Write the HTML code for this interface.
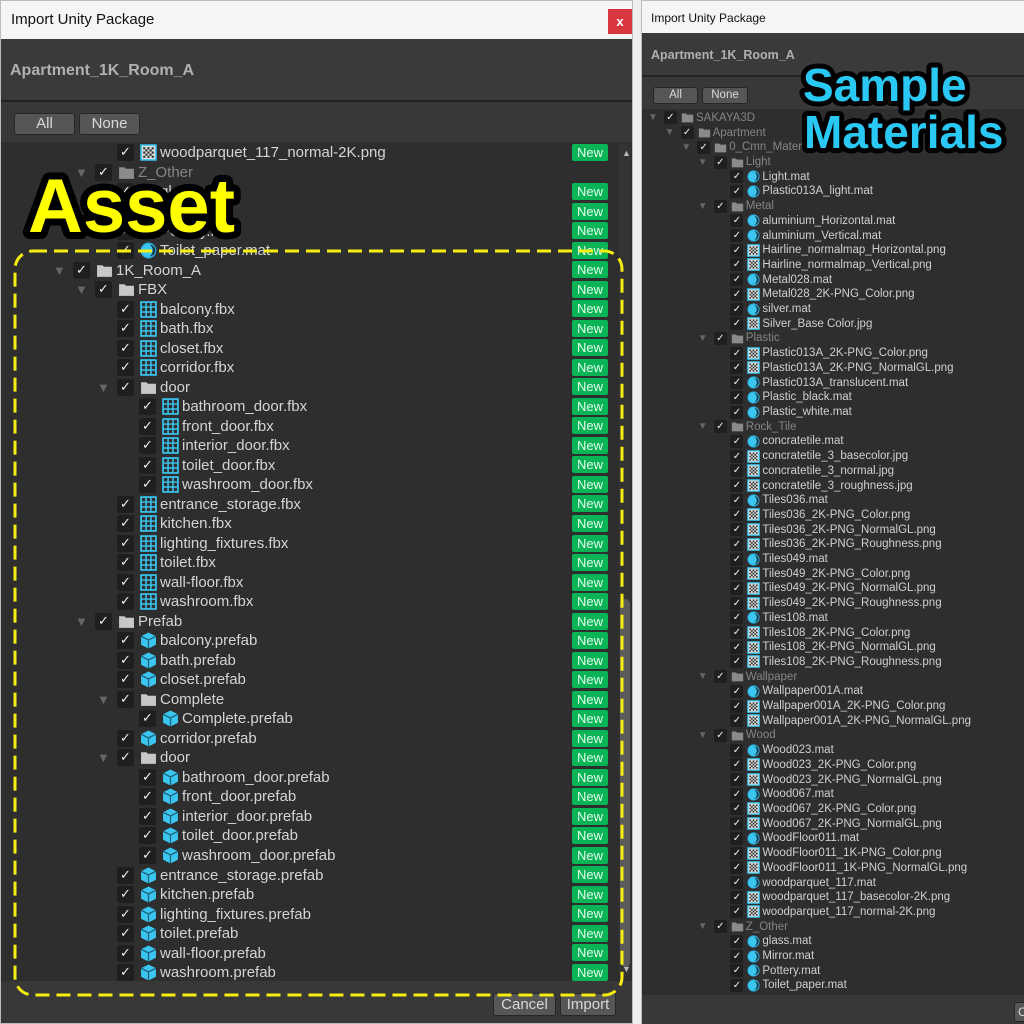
<!DOCTYPE html>
<html><head><meta charset="utf-8"><style>
*{margin:0;padding:0;box-sizing:border-box}
body{width:1024px;height:1024px;background:#eeeeee;position:relative;overflow:hidden;font-family:"Liberation Sans",sans-serif}
.win{position:absolute;background:#383838;overflow:hidden}
.tb{position:absolute;left:0;right:0;top:0;background:#f5f5f5;color:#111}
.hd{position:absolute;left:0;right:0;background:#3a3a3a;border-bottom:2px solid #222;color:#b0b0b0;font-weight:bold}
.btn{position:absolute;background:#565656;border:1px solid #262626;border-radius:3px;color:#d8d8d8;text-align:center}
.list{position:absolute;background:#2e2e2e;overflow:hidden}
.L .r{height:19.52px;display:flex;align-items:center;font-size:15px;color:#d4d4d4;white-space:nowrap;position:relative}
.L .a{width:20px;color:#666;font-size:13px;text-align:left}
.L .c{width:17px;height:17px;background:#1f1f1f;border-radius:2px;color:#f0f0f0;font-size:13px;line-height:17px;text-align:center;margin-right:6px;font-family:"DejaVu Sans",sans-serif}
.L svg{width:17px;height:17px;margin-right:3px;flex:none}
.L .n{position:absolute;left:571px;top:1px;width:36px;height:17px;background:#08b455;border-radius:2px;color:#e6ffee;font-size:13px;line-height:17px;text-align:center}
.R .r{height:14.71px;display:flex;align-items:center;font-size:11.5px;color:#d0d0d0;white-space:nowrap}
.R .a{width:16px;color:#666;font-size:10px}
.R .c{width:13px;height:13px;background:#1f1f1f;border-radius:2px;color:#eee;font-size:10px;line-height:13px;text-align:center;margin-right:4px;font-family:"DejaVu Sans",sans-serif}
.R svg{width:13px;height:13px;margin-right:2px;flex:none}
.g{color:#858585}
</style></head><body>
<svg width="0" height="0" style="position:absolute">
<symbol id="mat" viewBox="0 0 16 16"><circle cx="8" cy="8" r="7" fill="#3ac6f0"/><path d="M9 2.5a5.5 5.5 0 0 1 0 11a6.5 6.5 0 0 0 0-11z" fill="#1a3a48"/><circle cx="8" cy="8" r="7" fill="none" stroke="#2aa8d8" stroke-width="1"/></symbol>
<symbol id="tex" viewBox="0 0 16 16"><rect x="1" y="1" width="14" height="14" fill="#ddd" stroke="#3ac6f0" stroke-width="1.5"/><path d="M3 3h2v2H3zM7 3h2v2H7zM11 3h2v2h-2zM5 5h2v2H5zM9 5h2v2H9zM3 7h2v2H3zM7 7h2v2H7zM11 7h2v2h-2zM5 9h2v2H5zM9 9h2v2H9zM3 11h2v2H3zM7 11h2v2H7zM11 11h2v2h-2z" fill="#333"/></symbol>
<symbol id="fbx" viewBox="0 0 16 16"><rect x="1" y="1" width="14" height="14" fill="none" stroke="#3ac6f0" stroke-width="1.6"/><path d="M5.7 1v14M10.3 1v14M1 5.7h14M1 10.3h14" stroke="#3ac6f0" stroke-width="1.4"/></symbol>
<symbol id="pre" viewBox="0 0 16 16"><path d="M8 0.5L15 4v8l-7 3.5L1 12V4z" fill="#3ac6f0"/><path d="M1 4l7 3.5L15 4M8 7.5v8" fill="none" stroke="#1e5f78" stroke-width="1.2"/></symbol>
<symbol id="fol" viewBox="0 0 16 16"><path d="M1 3h5l1.5 1.5H15V14H1z" fill="#c8c8c8"/></symbol>
<symbol id="folg" viewBox="0 0 16 16"><path d="M1 3h5l1.5 1.5H15V14H1z" fill="#8a8a8a"/></symbol>
</svg>

<!-- LEFT WINDOW -->
<div class="win" style="left:0;top:0;width:633px;height:1024px;border:1px solid #bbb">
<div class="tb" style="height:38px;font-size:15px;padding:10px 0 0 10px">Import Unity Package</div>
<div style="position:absolute;left:607px;top:8px;width:24px;height:25px;background:#d8373f;color:#fff;font-size:13px;text-align:center;line-height:25px;font-weight:bold">x</div>
<div class="hd" style="top:38px;height:63px;font-size:16px;padding:23px 0 0 9px">Apartment_1K_Room_A</div>
<div class="btn" style="left:13px;top:112px;width:61px;height:22px;font-size:15px;line-height:20px">All</div>
<div class="btn" style="left:78px;top:112px;width:61px;height:22px;font-size:15px;line-height:20px">None</div>
<div class="list L" style="left:0;top:141px;width:632px;height:839px">
<div style="position:absolute;left:618px;top:2px;width:12px;height:832px;background:#333"></div>
<div style="position:absolute;left:621px;top:6px;color:#bbb;font-size:9px">▲</div>
<div style="position:absolute;left:619px;top:457px;width:10px;height:368px;background:#5b5b5b;border-radius:5px"></div>
<div style="position:absolute;left:621px;top:822px;color:#bbb;font-size:9px">▼</div>
<div style="position:absolute;top:1.2px;left:0;right:0">
<div class="r" style="padding-left:96px"><span class="a"></span><span class="c">✓</span><svg><use href="#tex"/></svg>woodparquet_117_normal-2K.png<span class="n">New</span></div>
<div class="r" style="padding-left:74px"><span class="a">▼</span><span class="c">✓</span><svg><use href="#folg"/></svg><span class="g">Z_Other</span></div>
<div class="r" style="padding-left:96px"><span class="a"></span><span class="c">✓</span><svg><use href="#mat"/></svg>glass.mat<span class="n">New</span></div>
<div class="r" style="padding-left:96px"><span class="a"></span><span class="c">✓</span><svg><use href="#mat"/></svg>Mirror.mat<span class="n">New</span></div>
<div class="r" style="padding-left:96px"><span class="a"></span><span class="c">✓</span><svg><use href="#mat"/></svg>Pottery.mat<span class="n">New</span></div>
<div class="r" style="padding-left:96px"><span class="a"></span><span class="c">✓</span><svg><use href="#mat"/></svg>Toilet_paper.mat<span class="n">New</span></div>
<div class="r" style="padding-left:52px"><span class="a">▼</span><span class="c">✓</span><svg><use href="#fol"/></svg>1K_Room_A<span class="n">New</span></div>
<div class="r" style="padding-left:74px"><span class="a">▼</span><span class="c">✓</span><svg><use href="#fol"/></svg>FBX<span class="n">New</span></div>
<div class="r" style="padding-left:96px"><span class="a"></span><span class="c">✓</span><svg><use href="#fbx"/></svg>balcony.fbx<span class="n">New</span></div>
<div class="r" style="padding-left:96px"><span class="a"></span><span class="c">✓</span><svg><use href="#fbx"/></svg>bath.fbx<span class="n">New</span></div>
<div class="r" style="padding-left:96px"><span class="a"></span><span class="c">✓</span><svg><use href="#fbx"/></svg>closet.fbx<span class="n">New</span></div>
<div class="r" style="padding-left:96px"><span class="a"></span><span class="c">✓</span><svg><use href="#fbx"/></svg>corridor.fbx<span class="n">New</span></div>
<div class="r" style="padding-left:96px"><span class="a">▼</span><span class="c">✓</span><svg><use href="#fol"/></svg>door<span class="n">New</span></div>
<div class="r" style="padding-left:118px"><span class="a"></span><span class="c">✓</span><svg><use href="#fbx"/></svg>bathroom_door.fbx<span class="n">New</span></div>
<div class="r" style="padding-left:118px"><span class="a"></span><span class="c">✓</span><svg><use href="#fbx"/></svg>front_door.fbx<span class="n">New</span></div>
<div class="r" style="padding-left:118px"><span class="a"></span><span class="c">✓</span><svg><use href="#fbx"/></svg>interior_door.fbx<span class="n">New</span></div>
<div class="r" style="padding-left:118px"><span class="a"></span><span class="c">✓</span><svg><use href="#fbx"/></svg>toilet_door.fbx<span class="n">New</span></div>
<div class="r" style="padding-left:118px"><span class="a"></span><span class="c">✓</span><svg><use href="#fbx"/></svg>washroom_door.fbx<span class="n">New</span></div>
<div class="r" style="padding-left:96px"><span class="a"></span><span class="c">✓</span><svg><use href="#fbx"/></svg>entrance_storage.fbx<span class="n">New</span></div>
<div class="r" style="padding-left:96px"><span class="a"></span><span class="c">✓</span><svg><use href="#fbx"/></svg>kitchen.fbx<span class="n">New</span></div>
<div class="r" style="padding-left:96px"><span class="a"></span><span class="c">✓</span><svg><use href="#fbx"/></svg>lighting_fixtures.fbx<span class="n">New</span></div>
<div class="r" style="padding-left:96px"><span class="a"></span><span class="c">✓</span><svg><use href="#fbx"/></svg>toilet.fbx<span class="n">New</span></div>
<div class="r" style="padding-left:96px"><span class="a"></span><span class="c">✓</span><svg><use href="#fbx"/></svg>wall-floor.fbx<span class="n">New</span></div>
<div class="r" style="padding-left:96px"><span class="a"></span><span class="c">✓</span><svg><use href="#fbx"/></svg>washroom.fbx<span class="n">New</span></div>
<div class="r" style="padding-left:74px"><span class="a">▼</span><span class="c">✓</span><svg><use href="#fol"/></svg>Prefab<span class="n">New</span></div>
<div class="r" style="padding-left:96px"><span class="a"></span><span class="c">✓</span><svg><use href="#pre"/></svg>balcony.prefab<span class="n">New</span></div>
<div class="r" style="padding-left:96px"><span class="a"></span><span class="c">✓</span><svg><use href="#pre"/></svg>bath.prefab<span class="n">New</span></div>
<div class="r" style="padding-left:96px"><span class="a"></span><span class="c">✓</span><svg><use href="#pre"/></svg>closet.prefab<span class="n">New</span></div>
<div class="r" style="padding-left:96px"><span class="a">▼</span><span class="c">✓</span><svg><use href="#fol"/></svg>Complete<span class="n">New</span></div>
<div class="r" style="padding-left:118px"><span class="a"></span><span class="c">✓</span><svg><use href="#pre"/></svg>Complete.prefab<span class="n">New</span></div>
<div class="r" style="padding-left:96px"><span class="a"></span><span class="c">✓</span><svg><use href="#pre"/></svg>corridor.prefab<span class="n">New</span></div>
<div class="r" style="padding-left:96px"><span class="a">▼</span><span class="c">✓</span><svg><use href="#fol"/></svg>door<span class="n">New</span></div>
<div class="r" style="padding-left:118px"><span class="a"></span><span class="c">✓</span><svg><use href="#pre"/></svg>bathroom_door.prefab<span class="n">New</span></div>
<div class="r" style="padding-left:118px"><span class="a"></span><span class="c">✓</span><svg><use href="#pre"/></svg>front_door.prefab<span class="n">New</span></div>
<div class="r" style="padding-left:118px"><span class="a"></span><span class="c">✓</span><svg><use href="#pre"/></svg>interior_door.prefab<span class="n">New</span></div>
<div class="r" style="padding-left:118px"><span class="a"></span><span class="c">✓</span><svg><use href="#pre"/></svg>toilet_door.prefab<span class="n">New</span></div>
<div class="r" style="padding-left:118px"><span class="a"></span><span class="c">✓</span><svg><use href="#pre"/></svg>washroom_door.prefab<span class="n">New</span></div>
<div class="r" style="padding-left:96px"><span class="a"></span><span class="c">✓</span><svg><use href="#pre"/></svg>entrance_storage.prefab<span class="n">New</span></div>
<div class="r" style="padding-left:96px"><span class="a"></span><span class="c">✓</span><svg><use href="#pre"/></svg>kitchen.prefab<span class="n">New</span></div>
<div class="r" style="padding-left:96px"><span class="a"></span><span class="c">✓</span><svg><use href="#pre"/></svg>lighting_fixtures.prefab<span class="n">New</span></div>
<div class="r" style="padding-left:96px"><span class="a"></span><span class="c">✓</span><svg><use href="#pre"/></svg>toilet.prefab<span class="n">New</span></div>
<div class="r" style="padding-left:96px"><span class="a"></span><span class="c">✓</span><svg><use href="#pre"/></svg>wall-floor.prefab<span class="n">New</span></div>
<div class="r" style="padding-left:96px"><span class="a"></span><span class="c">✓</span><svg><use href="#pre"/></svg>washroom.prefab<span class="n">New</span></div>
</div></div>
<div class="btn" style="left:492px;top:992px;width:63px;height:23px;font-size:15px;line-height:21px">Cancel</div>
<div class="btn" style="left:559px;top:992px;width:56px;height:23px;font-size:15px;line-height:21px">Import</div>
</div>

<!-- RIGHT WINDOW -->
<div class="win" style="left:641px;top:0;width:383px;height:1024px;border-left:1px solid #bbb;border-top:1px solid #bbb">
<div class="tb" style="height:32px;font-size:12px;padding:10px 0 0 9px">Import Unity Package</div>
<div class="hd" style="top:32px;height:44px;font-size:12.5px;padding:15px 0 0 9px">Apartment_1K_Room_A</div>
<div class="btn" style="left:11px;top:86px;width:45px;height:17px;font-size:11.5px;line-height:15px">All</div>
<div class="btn" style="left:60px;top:86px;width:46px;height:17px;font-size:11.5px;line-height:15px">None</div>
<div class="list R" style="left:0;top:108px;width:383px;height:886px">
<div style="position:absolute;top:1.6px;left:0;right:0">
<div class="r" style="padding-left:6px"><span class="a">▼</span><span class="c">✓</span><svg><use href="#folg"/></svg><span class="g">SAKAYA3D</span></div>
<div class="r" style="padding-left:22.6px"><span class="a">▼</span><span class="c">✓</span><svg><use href="#folg"/></svg><span class="g">Apartment</span></div>
<div class="r" style="padding-left:39.2px"><span class="a">▼</span><span class="c">✓</span><svg><use href="#folg"/></svg><span class="g">0_Cmn_Materials</span></div>
<div class="r" style="padding-left:55.8px"><span class="a">▼</span><span class="c">✓</span><svg><use href="#folg"/></svg><span class="g">Light</span></div>
<div class="r" style="padding-left:72.4px"><span class="a"></span><span class="c">✓</span><svg><use href="#mat"/></svg>Light.mat</div>
<div class="r" style="padding-left:72.4px"><span class="a"></span><span class="c">✓</span><svg><use href="#mat"/></svg>Plastic013A_light.mat</div>
<div class="r" style="padding-left:55.8px"><span class="a">▼</span><span class="c">✓</span><svg><use href="#folg"/></svg><span class="g">Metal</span></div>
<div class="r" style="padding-left:72.4px"><span class="a"></span><span class="c">✓</span><svg><use href="#mat"/></svg>aluminium_Horizontal.mat</div>
<div class="r" style="padding-left:72.4px"><span class="a"></span><span class="c">✓</span><svg><use href="#mat"/></svg>aluminium_Vertical.mat</div>
<div class="r" style="padding-left:72.4px"><span class="a"></span><span class="c">✓</span><svg><use href="#tex"/></svg>Hairline_normalmap_Horizontal.png</div>
<div class="r" style="padding-left:72.4px"><span class="a"></span><span class="c">✓</span><svg><use href="#tex"/></svg>Hairline_normalmap_Vertical.png</div>
<div class="r" style="padding-left:72.4px"><span class="a"></span><span class="c">✓</span><svg><use href="#mat"/></svg>Metal028.mat</div>
<div class="r" style="padding-left:72.4px"><span class="a"></span><span class="c">✓</span><svg><use href="#tex"/></svg>Metal028_2K-PNG_Color.png</div>
<div class="r" style="padding-left:72.4px"><span class="a"></span><span class="c">✓</span><svg><use href="#mat"/></svg>silver.mat</div>
<div class="r" style="padding-left:72.4px"><span class="a"></span><span class="c">✓</span><svg><use href="#tex"/></svg>Silver_Base Color.jpg</div>
<div class="r" style="padding-left:55.8px"><span class="a">▼</span><span class="c">✓</span><svg><use href="#folg"/></svg><span class="g">Plastic</span></div>
<div class="r" style="padding-left:72.4px"><span class="a"></span><span class="c">✓</span><svg><use href="#tex"/></svg>Plastic013A_2K-PNG_Color.png</div>
<div class="r" style="padding-left:72.4px"><span class="a"></span><span class="c">✓</span><svg><use href="#tex"/></svg>Plastic013A_2K-PNG_NormalGL.png</div>
<div class="r" style="padding-left:72.4px"><span class="a"></span><span class="c">✓</span><svg><use href="#mat"/></svg>Plastic013A_translucent.mat</div>
<div class="r" style="padding-left:72.4px"><span class="a"></span><span class="c">✓</span><svg><use href="#mat"/></svg>Plastic_black.mat</div>
<div class="r" style="padding-left:72.4px"><span class="a"></span><span class="c">✓</span><svg><use href="#mat"/></svg>Plastic_white.mat</div>
<div class="r" style="padding-left:55.8px"><span class="a">▼</span><span class="c">✓</span><svg><use href="#folg"/></svg><span class="g">Rock_Tile</span></div>
<div class="r" style="padding-left:72.4px"><span class="a"></span><span class="c">✓</span><svg><use href="#mat"/></svg>concratetile.mat</div>
<div class="r" style="padding-left:72.4px"><span class="a"></span><span class="c">✓</span><svg><use href="#tex"/></svg>concratetile_3_basecolor.jpg</div>
<div class="r" style="padding-left:72.4px"><span class="a"></span><span class="c">✓</span><svg><use href="#tex"/></svg>concratetile_3_normal.jpg</div>
<div class="r" style="padding-left:72.4px"><span class="a"></span><span class="c">✓</span><svg><use href="#tex"/></svg>concratetile_3_roughness.jpg</div>
<div class="r" style="padding-left:72.4px"><span class="a"></span><span class="c">✓</span><svg><use href="#mat"/></svg>Tiles036.mat</div>
<div class="r" style="padding-left:72.4px"><span class="a"></span><span class="c">✓</span><svg><use href="#tex"/></svg>Tiles036_2K-PNG_Color.png</div>
<div class="r" style="padding-left:72.4px"><span class="a"></span><span class="c">✓</span><svg><use href="#tex"/></svg>Tiles036_2K-PNG_NormalGL.png</div>
<div class="r" style="padding-left:72.4px"><span class="a"></span><span class="c">✓</span><svg><use href="#tex"/></svg>Tiles036_2K-PNG_Roughness.png</div>
<div class="r" style="padding-left:72.4px"><span class="a"></span><span class="c">✓</span><svg><use href="#mat"/></svg>Tiles049.mat</div>
<div class="r" style="padding-left:72.4px"><span class="a"></span><span class="c">✓</span><svg><use href="#tex"/></svg>Tiles049_2K-PNG_Color.png</div>
<div class="r" style="padding-left:72.4px"><span class="a"></span><span class="c">✓</span><svg><use href="#tex"/></svg>Tiles049_2K-PNG_NormalGL.png</div>
<div class="r" style="padding-left:72.4px"><span class="a"></span><span class="c">✓</span><svg><use href="#tex"/></svg>Tiles049_2K-PNG_Roughness.png</div>
<div class="r" style="padding-left:72.4px"><span class="a"></span><span class="c">✓</span><svg><use href="#mat"/></svg>Tiles108.mat</div>
<div class="r" style="padding-left:72.4px"><span class="a"></span><span class="c">✓</span><svg><use href="#tex"/></svg>Tiles108_2K-PNG_Color.png</div>
<div class="r" style="padding-left:72.4px"><span class="a"></span><span class="c">✓</span><svg><use href="#tex"/></svg>Tiles108_2K-PNG_NormalGL.png</div>
<div class="r" style="padding-left:72.4px"><span class="a"></span><span class="c">✓</span><svg><use href="#tex"/></svg>Tiles108_2K-PNG_Roughness.png</div>
<div class="r" style="padding-left:55.8px"><span class="a">▼</span><span class="c">✓</span><svg><use href="#folg"/></svg><span class="g">Wallpaper</span></div>
<div class="r" style="padding-left:72.4px"><span class="a"></span><span class="c">✓</span><svg><use href="#mat"/></svg>Wallpaper001A.mat</div>
<div class="r" style="padding-left:72.4px"><span class="a"></span><span class="c">✓</span><svg><use href="#tex"/></svg>Wallpaper001A_2K-PNG_Color.png</div>
<div class="r" style="padding-left:72.4px"><span class="a"></span><span class="c">✓</span><svg><use href="#tex"/></svg>Wallpaper001A_2K-PNG_NormalGL.png</div>
<div class="r" style="padding-left:55.8px"><span class="a">▼</span><span class="c">✓</span><svg><use href="#folg"/></svg><span class="g">Wood</span></div>
<div class="r" style="padding-left:72.4px"><span class="a"></span><span class="c">✓</span><svg><use href="#mat"/></svg>Wood023.mat</div>
<div class="r" style="padding-left:72.4px"><span class="a"></span><span class="c">✓</span><svg><use href="#tex"/></svg>Wood023_2K-PNG_Color.png</div>
<div class="r" style="padding-left:72.4px"><span class="a"></span><span class="c">✓</span><svg><use href="#tex"/></svg>Wood023_2K-PNG_NormalGL.png</div>
<div class="r" style="padding-left:72.4px"><span class="a"></span><span class="c">✓</span><svg><use href="#mat"/></svg>Wood067.mat</div>
<div class="r" style="padding-left:72.4px"><span class="a"></span><span class="c">✓</span><svg><use href="#tex"/></svg>Wood067_2K-PNG_Color.png</div>
<div class="r" style="padding-left:72.4px"><span class="a"></span><span class="c">✓</span><svg><use href="#tex"/></svg>Wood067_2K-PNG_NormalGL.png</div>
<div class="r" style="padding-left:72.4px"><span class="a"></span><span class="c">✓</span><svg><use href="#mat"/></svg>WoodFloor011.mat</div>
<div class="r" style="padding-left:72.4px"><span class="a"></span><span class="c">✓</span><svg><use href="#tex"/></svg>WoodFloor011_1K-PNG_Color.png</div>
<div class="r" style="padding-left:72.4px"><span class="a"></span><span class="c">✓</span><svg><use href="#tex"/></svg>WoodFloor011_1K-PNG_NormalGL.png</div>
<div class="r" style="padding-left:72.4px"><span class="a"></span><span class="c">✓</span><svg><use href="#mat"/></svg>woodparquet_117.mat</div>
<div class="r" style="padding-left:72.4px"><span class="a"></span><span class="c">✓</span><svg><use href="#tex"/></svg>woodparquet_117_basecolor-2K.png</div>
<div class="r" style="padding-left:72.4px"><span class="a"></span><span class="c">✓</span><svg><use href="#tex"/></svg>woodparquet_117_normal-2K.png</div>
<div class="r" style="padding-left:55.8px"><span class="a">▼</span><span class="c">✓</span><svg><use href="#folg"/></svg><span class="g">Z_Other</span></div>
<div class="r" style="padding-left:72.4px"><span class="a"></span><span class="c">✓</span><svg><use href="#mat"/></svg>glass.mat</div>
<div class="r" style="padding-left:72.4px"><span class="a"></span><span class="c">✓</span><svg><use href="#mat"/></svg>Mirror.mat</div>
<div class="r" style="padding-left:72.4px"><span class="a"></span><span class="c">✓</span><svg><use href="#mat"/></svg>Pottery.mat</div>
<div class="r" style="padding-left:72.4px"><span class="a"></span><span class="c">✓</span><svg><use href="#mat"/></svg>Toilet_paper.mat</div>
</div></div>
<div class="btn" style="left:372px;top:1001px;width:30px;height:20px;font-size:12px;line-height:18px;text-align:left;padding-left:3px">C</div>
</div>

<!-- OVERLAY -->
<svg style="position:absolute;left:0;top:0" width="1024" height="1024">
<rect x="15" y="251" width="607" height="744" rx="18" fill="none" stroke="#f5ee10" stroke-width="3" stroke-dasharray="14 7"/>
<text x="28" y="232" font-family="Liberation Sans" font-weight="bold" font-size="76" fill="#ffff00" stroke="#000" stroke-width="14" stroke-linejoin="round" paint-order="stroke">Asset</text>
<text x="803" y="101" font-family="Liberation Sans" font-weight="bold" font-size="46" fill="#2ac8f5" stroke="#000" stroke-width="10" stroke-linejoin="round" paint-order="stroke">Sample</text>
<text x="804" y="148" font-family="Liberation Sans" font-weight="bold" font-size="46" fill="#2ac8f5" stroke="#000" stroke-width="10" stroke-linejoin="round" paint-order="stroke">Materials</text>
</svg>
</body></html>
